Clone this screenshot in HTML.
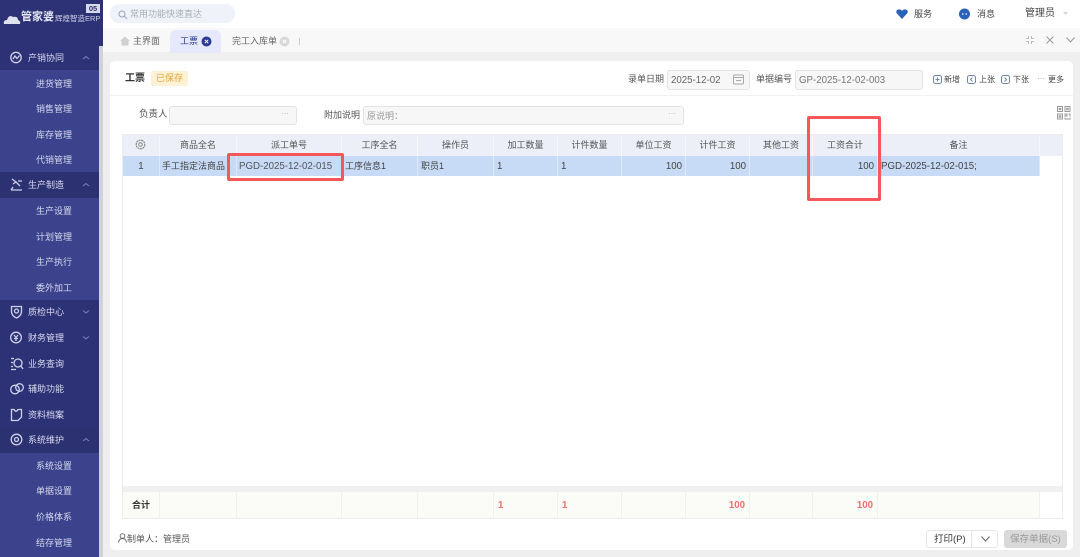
<!DOCTYPE html>
<html><head><meta charset="utf-8">
<style>
*{box-sizing:border-box}
html,body{margin:0;padding:0}
body{width:1080px;height:557px;position:relative;overflow:hidden;background:#fff;font-family:"Liberation Sans","Noto Sans CJK SC",sans-serif;font-size:9px;color:#555}
.a{position:absolute;white-space:nowrap}
.m{position:absolute;left:28px;font-size:9px;color:#d8daf0;line-height:12px;white-space:nowrap}
.s{position:absolute;left:36px;font-size:9px;color:#d5d8f0;line-height:12px;white-space:nowrap}
.sub{position:absolute;left:0;width:99px;background:#3c438c}
.dark{position:absolute;left:0;width:99px;background:#2c3172}
svg{position:absolute;overflow:visible}
.i{fill:none;stroke:#cdd0e8;stroke-width:1.3}
.ch{fill:none;stroke:#7e83b4;stroke-width:1}
.th{position:absolute;top:135px;height:21px;line-height:21px;text-align:center;background:#eceff7;border-right:1px solid #f6f7fb;color:#555;font-size:9px;white-space:nowrap}
.td{position:absolute;top:156px;height:20px;line-height:20px;background:#c7dbf6;border-right:1px solid #dde8f9;color:#444;font-size:9px;padding:0 3px;white-space:nowrap;overflow:hidden}
.n{font-size:9.7px;line-height:22px}
.r{text-align:right}
.tf{position:absolute;top:492px;height:26px;line-height:28px;background:#fbfcf7;border-right:1px solid #f0f1ec;color:#f56c6c;font-weight:bold;font-size:9.7px;padding:0 4px;white-space:nowrap}
.box{position:absolute;background:#f7f7f7;border:1px solid #e3e3e3;border-radius:3px;font-size:9.7px;color:#666;white-space:nowrap}
.red{position:absolute;border:3px solid #f5575a;border-radius:2px}
.l{position:absolute;font-size:9px;color:#555;white-space:nowrap;line-height:12px}
</style></head><body>

<!-- sidebar -->
<div class="a" style="left:0;top:0;width:103px;height:46px;background:#2d3276"></div>
<div class="a" style="left:0;top:46px;width:99px;height:511px;background:#2d3276"></div>
<div class="a" style="left:99px;top:46px;width:4px;height:511px;background:#d2d2d2"></div>

<!-- logo -->
<svg style="left:3px;top:13px" width="18" height="12"><path d="M1 11 Q0 7 4 7 Q6 1 10 4 Q15 3 15 7 Q18 8 17 11 Z" fill="#dfe1ee"/></svg>
<div class="a" style="left:21px;top:10px;font-size:11px;font-weight:bold;color:#e4e6f4;line-height:15px">管家婆</div>
<div class="a" style="left:55px;top:13px;font-size:7.5px;color:#cfd2e8;line-height:11px;width:45px;overflow:hidden">辉煌智造ERP</div>
<div class="a" style="left:86px;top:4px;width:14px;height:9px;background:#d8daea;color:#2d3276;font-size:7.500px;line-height:9px;text-align:center;font-weight:bold">05</div>

<div class="sub" style="top:70px;height:102px"></div>
<div class="dark" style="top:172px;height:26px"></div>
<div class="sub" style="top:198px;height:102px"></div>
<div class="dark" style="top:428px;height:25px"></div>
<div class="sub" style="top:453px;height:104px"></div>

<!-- menu icons -->
<svg style="left:10px;top:51px" width="14" height="14"><circle cx="6" cy="6.5" r="5.2" class="i"/><path d="M3 8 L5 5 L7 7.5 L9.5 4.5" class="i"/></svg>
<svg style="left:10px;top:178px" width="14" height="14"><path d="M2 1 L6 4 L3 6 M6 4 L10 8 M12 3 H8 M1 12 H12 M3 9 L1 12" class="i"/></svg>
<svg style="left:10px;top:305px" width="14" height="14"><path d="M1.500 1.500 H11.500 V7 Q11 11 6.500 13 Q2 11 1.500 7 Z" class="i"/><circle cx="6.500" cy="6" r="2" class="i"/></svg>
<svg style="left:10px;top:331px" width="14" height="14"><circle cx="6" cy="6.500" r="5.300" class="i"/><path d="M4 4 L6 6.500 L8 4 M6 6.500 V10 M4 7.500 H8" class="i"/></svg>
<svg style="left:10px;top:357px" width="14" height="14"><path d="M1 1.500 H4 M1 5.500 H3 M1 9.500 H3 M1 12.500 H6" class="i"/><circle cx="8" cy="6" r="4" class="i"/><path d="M11 9 L13 12" class="i"/></svg>
<svg style="left:10px;top:382px" width="15" height="14"><circle cx="5" cy="7.500" r="4.300" class="i" stroke-width="1.800"/><circle cx="9.500" cy="5.500" r="3.800" class="i"/></svg>
<svg style="left:10px;top:408px" width="14" height="14"><path d="M1.500 1.500 H4 Q6 5 8 1.500 H11.500 V9 L8 12.500 H1.500 Z" class="i"/></svg>
<svg style="left:10px;top:433px" width="14" height="14"><circle cx="6.500" cy="6.500" r="5.300" class="i"/><circle cx="6.500" cy="6.500" r="2" class="i"/></svg>

<div class="m" style="top:52px">产销协同</div>
<div class="m" style="top:179px">生产制造</div>
<div class="m" style="top:306px">质检中心</div>
<div class="m" style="top:332px">财务管理</div>
<div class="m" style="top:358px">业务查询</div>
<div class="m" style="top:383px">辅助功能</div>
<div class="m" style="top:409px">资料档案</div>
<div class="m" style="top:434px">系统维护</div>

<svg style="left:82px;top:55px" width="8" height="5"><path d="M1 4 L4 1.500 L7 4" class="ch"/></svg>
<svg style="left:82px;top:182px" width="8" height="5"><path d="M1 4 L4 1.500 L7 4" class="ch"/></svg>
<svg style="left:82px;top:309px" width="8" height="5"><path d="M1 1.500 L4 4 L7 1.500" class="ch"/></svg>
<svg style="left:82px;top:335px" width="8" height="5"><path d="M1 1.500 L4 4 L7 1.500" class="ch"/></svg>
<svg style="left:82px;top:437px" width="8" height="5"><path d="M1 4 L4 1.500 L7 4" class="ch"/></svg>

<div class="s" style="top:78px">进货管理</div>
<div class="s" style="top:103px">销售管理</div>
<div class="s" style="top:129px">库存管理</div>
<div class="s" style="top:154px">代销管理</div>
<div class="s" style="top:205px">生产设置</div>
<div class="s" style="top:231px">计划管理</div>
<div class="s" style="top:256px">生产执行</div>
<div class="s" style="top:282px">委外加工</div>
<div class="s" style="top:460px">系统设置</div>
<div class="s" style="top:485px">单据设置</div>
<div class="s" style="top:511px">价格体系</div>
<div class="s" style="top:537px">结存管理</div>

<!-- top bar -->
<div class="a" style="left:110px;top:4px;width:125px;height:19px;background:#eff2f9;border-radius:9px"></div>
<svg style="left:118px;top:10px" width="10" height="10"><circle cx="4" cy="4" r="3" fill="none" stroke="#9aa3bd"/><path d="M6.500 6.500 L9 9" stroke="#9aa3bd"/></svg>
<div class="a" style="left:130px;top:8px;font-size:9px;color:#a9adb8;line-height:12px">常用功能快速直达</div>

<svg style="left:896px;top:9px" width="12" height="10"><path d="M6 10 L0.500 4 Q-0.500 1 2.500 0.500 Q5 0 6 2 Q7.500 0 10 0.500 Q12.500 1.500 11.500 4 Z" fill="#2a62b8"/></svg>
<div class="a" style="left:914px;top:8px;font-size:9px;color:#444;line-height:12px">服务</div>
<svg style="left:959px;top:8px" width="12" height="12"><circle cx="5.500" cy="6" r="5.500" fill="#2a62b8"/><circle cx="3.800" cy="6" r=".8" fill="#fff"/><circle cx="7.200" cy="6" r=".8" fill="#fff"/></svg>
<div class="a" style="left:977px;top:8px;font-size:9px;color:#444;line-height:12px">消息</div>
<div class="a" style="left:1025px;top:7px;font-size:10px;color:#444;line-height:13px">管理员</div>
<svg style="left:1063px;top:12px" width="5" height="3"><path d="M0 0 H5 L2.500 3 Z" fill="#d2d5dd"/></svg>

<!-- tabs -->
<div class="a" style="left:103px;top:28px;width:977px;height:24px;background:#f8f8f8"></div>
<div class="a" style="left:103px;top:52px;width:977px;height:505px;background:#efefef"></div>
<svg style="left:120px;top:36px" width="10" height="10"><path d="M0 5 L5 0.500 L10 5 H8.500 V9.500 H1.500 V5 Z" fill="#cfcfcf"/></svg>
<div class="a" style="left:133px;top:35px;font-size:9px;color:#666;line-height:12px">主界面</div>
<div class="a" style="left:170px;top:30px;width:51px;height:23px;background:#e5e9fb;border-radius:6px 6px 0 0"></div>
<div class="a" style="left:180px;top:35px;font-size:9px;color:#2d3a96;line-height:12px">工票</div>
<svg style="left:201px;top:36px" width="11" height="11"><circle cx="5.500" cy="5.500" r="5" fill="#2d3a96"/><path d="M3.800 3.800 L7.200 7.200 M7.200 3.800 L3.800 7.200" stroke="#fff" stroke-width="1"/></svg>
<div class="a" style="left:232px;top:35px;font-size:9px;color:#666;line-height:12px">完工入库单</div>
<svg style="left:279px;top:36px" width="11" height="11"><circle cx="5.500" cy="5.500" r="5" fill="#d9d9d9"/><path d="M3.800 3.800 L7.200 7.200 M7.200 3.800 L3.800 7.200" stroke="#fff" stroke-width="1"/></svg>
<div class="a" style="left:299px;top:38px;width:1px;height:7px;background:#ccc"></div>
<svg style="left:1026px;top:36px" width="8" height="8"><path d="M0 2.500 H2.500 V0 M5.500 0 V2.500 H8 M0 5.500 H2.500 V8 M5.500 8 V5.500 H8" fill="none" stroke="#aaa" stroke-width=".8"/></svg>
<svg style="left:1046px;top:36px" width="8" height="8"><path d="M.5 .5 L7.500 7.500 M7.500 .5 L.5 7.500" stroke="#999" stroke-width="1"/></svg>
<svg style="left:1066px;top:37px" width="9" height="6"><path d="M.5 .5 L4.500 5 L8.500 .5" fill="none" stroke="#999" stroke-width="1"/></svg>

<!-- card -->
<div class="a" style="left:110px;top:61px;width:963px;height:489px;background:#fff;border-radius:5px"></div>
<div class="a" style="left:110px;top:95px;width:963px;height:1px;background:#f2f2f2"></div>
<div class="a" style="left:125px;top:72px;font-size:10px;font-weight:bold;color:#333;line-height:14px">工票</div>
<div class="a" style="left:151px;top:71px;width:37px;height:15px;background:#fdf3d4;border-radius:2px;color:#e6a23c;font-size:9px;line-height:15px;text-align:center">已保存</div>

<div class="l" style="left:628px;top:73px">录单日期</div>
<div class="box" style="left:667px;top:70px;width:83px;height:20px;line-height:20px;padding-left:3px">2025-12-02</div>
<svg style="left:733px;top:74px" width="12" height="11"><rect x=".5" y="1" width="10" height="9" rx="1" fill="none" stroke="#aaa"/><path d="M.5 3.500 H10.500 M3 6.500 H8" stroke="#aaa"/></svg>
<div class="l" style="left:756px;top:73px">单据编号</div>
<div class="box" style="left:795px;top:70px;width:128px;height:20px;line-height:20px;padding-left:3px;color:#777">GP-2025-12-02-003</div>
<svg style="left:933px;top:75px" width="10" height="10"><rect x=".5" y=".5" width="8" height="8" rx="2" fill="none" stroke="#6d86a8"/><path d="M2.500 4.500 H6.500 M4.500 2.500 V6.500" stroke="#6d86a8"/></svg>
<div class="a" style="left:944px;top:74px;font-size:8px;color:#444;line-height:11px">新增</div>
<svg style="left:967px;top:75px" width="10" height="10"><rect x=".5" y=".5" width="8" height="8" rx="2" fill="none" stroke="#6d86a8"/><path d="M5.500 2.500 L3.500 4.500 L5.500 6.500" fill="none" stroke="#6d86a8"/></svg>
<div class="a" style="left:979px;top:74px;font-size:8px;color:#444;line-height:11px">上张</div>
<svg style="left:1001px;top:75px" width="10" height="10"><rect x=".5" y=".5" width="8" height="8" rx="2" fill="none" stroke="#6d86a8"/><path d="M3.500 2.500 L5.500 4.500 L3.500 6.500" fill="none" stroke="#6d86a8"/></svg>
<div class="a" style="left:1013px;top:74px;font-size:8px;color:#444;line-height:11px">下张</div>
<div class="a" style="left:1037px;top:73px;font-size:8px;color:#999;line-height:11px">···</div>
<div class="a" style="left:1048px;top:74px;font-size:8px;color:#444;line-height:11px">更多</div>

<div class="l" style="left:139px;top:109px;font-size:9.500px">负责人</div>
<div class="box" style="left:169px;top:106px;width:128px;height:19px"></div>
<div class="a" style="left:281px;top:109px;font-size:8px;color:#aaa;line-height:10px">···</div>
<div class="l" style="left:324px;top:109px">附加说明</div>
<div class="box" style="left:363px;top:106px;width:321px;height:19px;line-height:18px;padding-left:3px;color:#999;font-size:9px">原说明：</div>
<div class="a" style="left:668px;top:109px;font-size:8px;color:#aaa;line-height:10px">···</div>
<svg style="left:1057px;top:106px" width="14" height="14"><path d="M.5 .5 H5.500 V5.500 H.5 Z M8 .5 H13 V5.500 H8 Z M.5 8 H5.500 V13 H.5 Z M8 8 H10 V10 H8 Z M11.500 8 H13 V10.500 M8 11.500 V13 H13 V11.500 M2.200 2.200 H3.800 V3.800 H2.200 Z M9.700 2.200 H11.300 V3.800 H9.700 Z M2.200 9.700 H3.800 V11.300 H2.200 Z" fill="none" stroke="#999" stroke-width="1"/></svg>

<!-- table frame -->
<div class="a" style="left:122px;top:134px;width:941px;height:385px;border:1px solid #ececec;background:#fff"></div>
<div class="a" style="left:123px;top:135px;width:939px;height:21px;background:#eceff7"></div>

<div class="th" style="left:123px;width:37px"></div>
<svg style="left:135px;top:139px" width="11" height="11"><circle cx="5.500" cy="5.500" r="4.300" fill="none" stroke="#888" stroke-width="1.200" stroke-dasharray="2 .6"/><circle cx="5.500" cy="5.500" r="1.800" fill="none" stroke="#888"/></svg>
<div class="th" style="left:160px;width:77px">商品全名</div>
<div class="th" style="left:237px;width:105px">派工单号</div>
<div class="th" style="left:342px;width:76px">工序全名</div>
<div class="th" style="left:418px;width:76px">操作员</div>
<div class="th" style="left:494px;width:64px">加工数量</div>
<div class="th" style="left:558px;width:64px">计件数量</div>
<div class="th" style="left:622px;width:64px">单位工资</div>
<div class="th" style="left:686px;width:64px">计件工资</div>
<div class="th" style="left:750px;width:63px">其他工资</div>
<div class="th" style="left:813px;width:65px">工资合计</div>
<div class="th" style="left:878px;width:162px">备注</div>

<div class="td n" style="left:123px;width:37px;text-align:center">1</div>
<div class="td" style="left:160px;width:77px;padding:0 0 0 2px">手工指定法商品</div>
<div class="td n" style="left:237px;width:105px;color:#555;padding:0 0 0 2px">PGD-2025-12-02-015</div>
<div class="td" style="left:342px;width:76px">工序信息1</div>
<div class="td" style="left:418px;width:76px">职员1</div>
<div class="td n" style="left:494px;width:64px">1</div>
<div class="td n" style="left:558px;width:64px">1</div>
<div class="td r n" style="left:622px;width:64px">100</div>
<div class="td r n" style="left:686px;width:64px">100</div>
<div class="td" style="left:750px;width:63px"></div>
<div class="td r n" style="left:813px;width:65px">100</div>
<div class="td n" style="left:878px;width:162px">PGD-2025-12-02-015;</div>

<!-- scrollbar and footer -->
<div class="a" style="left:123px;top:486px;width:939px;height:6px;background:#f0f0f0"></div>
<div class="tf" style="left:123px;width:37px;color:#333;text-align:center;padding:0;font-size:9px;line-height:26px">合计</div>
<div class="tf" style="left:160px;width:77px"></div>
<div class="tf" style="left:237px;width:105px"></div>
<div class="tf" style="left:342px;width:76px"></div>
<div class="tf" style="left:418px;width:76px"></div>
<div class="tf" style="left:494px;width:64px">1</div>
<div class="tf" style="left:558px;width:64px">1</div>
<div class="tf" style="left:622px;width:64px"></div>
<div class="tf r" style="left:686px;width:64px">100</div>
<div class="tf" style="left:750px;width:63px"></div>
<div class="tf r" style="left:813px;width:65px">100</div>
<div class="tf" style="left:878px;width:162px"></div>

<!-- red annotation boxes -->
<div class="red" style="left:227px;top:153px;width:117px;height:28px"></div>
<div class="red" style="left:807px;top:116px;width:74px;height:85px"></div>

<!-- bottom -->
<svg style="left:118px;top:533px" width="9" height="10"><circle cx="4.500" cy="3" r="2.300" fill="none" stroke="#666" stroke-width=".9"/><path d="M.5 9.500 Q1 5.500 4.500 5.500 Q8 5.500 8.500 9.500" fill="none" stroke="#666" stroke-width=".9"/></svg>
<div class="l" style="left:127px;top:533px">制单人：管理员</div>
<div class="a" style="left:926px;top:530px;width:72px;height:18px;border:1px solid #e6e6e6;border-radius:3px;background:#fff"></div>
<div class="a" style="left:971px;top:530px;width:1px;height:18px;background:#e6e6e6"></div>
<div class="a" style="left:934px;top:534px;font-size:9.500px;color:#333;line-height:12px">打印(P)</div>
<svg style="left:981px;top:536px" width="9" height="6"><path d="M.5 .5 L4.500 5 L8.500 .5" fill="none" stroke="#666" stroke-width="1"/></svg>
<div class="a" style="left:1004px;top:530px;width:63px;height:18px;background:#d9d9d9;border-radius:3px;color:#999;font-size:9.500px;line-height:20px;text-align:center">保存单据(S)</div>

</body></html>
